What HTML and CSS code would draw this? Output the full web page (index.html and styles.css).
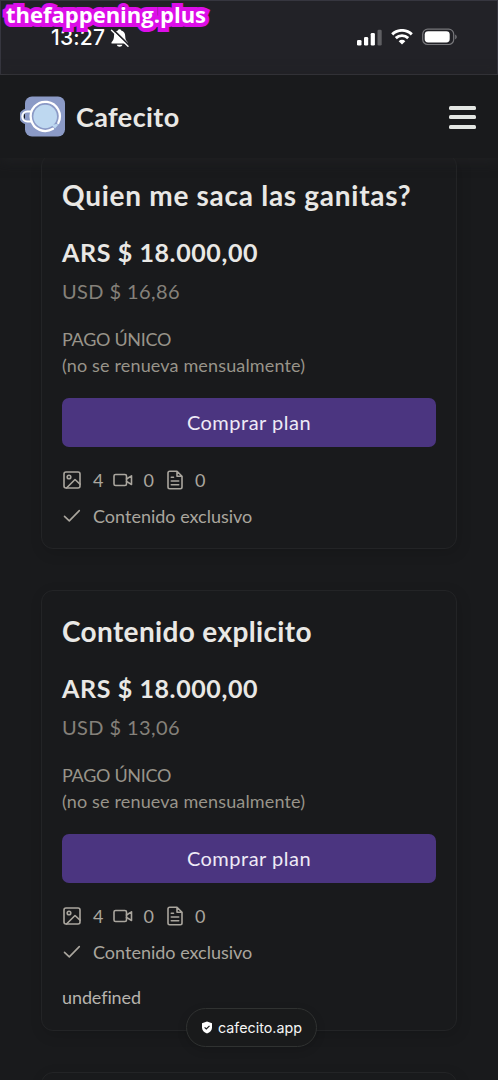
FILE: index.html
```html
<!DOCTYPE html>
<html lang="es">
<head>
<meta charset="utf-8">
<title>Cafecito</title>
<link rel="stylesheet" href="styles.css">
</head>
<body>
<svg class="defs" width="0" height="0" aria-hidden="true">
  <symbol id="image" viewBox="0 0 18 18"><rect x="1" y="1" width="16" height="16" rx="2"/><circle cx="6" cy="6" r="1.8"/><path d="M3.5 17 12 8.5l5 4.7"/></symbol>
  <symbol id="video" viewBox="0 0 20 18"><rect x="1" y="3.5" width="12.5" height="11" rx="1.6"/><path d="M13.5 8 18.5 4.8v8.7L13.5 10.4"/></symbol>
  <symbol id="file" viewBox="0 0 16 20"><path d="M10 1.2H2.7C1.8 1.2 1 2 1 2.9v14.2c0 1 .8 1.7 1.7 1.7h10.6c1 0 1.7-.8 1.7-1.7V6.2zM10 1.2v5h5M4.3 7.2h2.2M4.3 11h7.4M4.3 14.8h7.4"/></symbol>
  <symbol id="check" viewBox="0 0 18 14"><path d="m1.5 7.3 4.8 4.6L16.3 1.6"/></symbol>
</svg>
<div class="screen">
  <div class="status">
    <span class="time">13:27</span>
    <svg class="bell" viewBox="0 0 20 20"><path fill="#fff" d="M9.5 1.3c.9 0 1.5.5 1.7 1.3 2.6.7 4 2.6 4 5.3 0 3.2.9 4.500 2.500 6.400v1.200H1.500v-1.200C3 12.500 4 11 4 7.900c0-2.700 1.400-4.600 3.900-5.300.2-.8.8-1.300 1.600-1.300zM6.800 16.700h5.600c-.3 1.200-1.400 2-2.800 2s-2.500-.8-2.800-2z"/><path d="M2.600 1.200 19 17.200" stroke="#222227" stroke-width="1.800"/><path d="M1.500 2.200 18 18.300" stroke="#fff" stroke-width="1.400" stroke-linecap="round"/></svg>
    <div class="signals">
      <svg class="cell" viewBox="0 0 26 17"><rect x="0" y="11" width="4.500" height="5.500" rx="1.300"/><rect x="7" y="8" width="4.200" height="8.500" rx="1.300"/><rect x="13.700" y="4" width="4.200" height="12.500" rx="1.300"/><rect x="20.500" y=".800" width="4.200" height="15.700" rx="1.300" opacity=".28"/></svg>
      <svg class="wifi" viewBox="0 0 22 16"><g fill="none" stroke="#fff" stroke-width="2.900"><path d="M1.200 5.400a14 14 0 0 1 19.600 0"/><path d="M4.800 9.100a8.900 8.900 0 0 1 12.400 0"/></g><path fill="#fff" d="M11 15.500 7.700 12.200a4.700 4.700 0 0 1 6.600 0z"/></svg>
      <svg class="battery" viewBox="0 0 36 18"><rect x=".7" y="1.200" width="31" height="15.300" rx="5" fill="none" stroke="#77777b" stroke-width="1.200"/><rect x="2.700" y="3.200" width="25" height="11.300" rx="3.400" fill="#fff"/><path d="M33.200 6.500c2 .8 2 4 0 4.800z" fill="#77777b"/></svg>
    </div>
  </div>
  <div class="watermark">thefappening.plus</div>
  <header class="header">
    <svg class="logo" viewBox="0 0 46 42"><rect x="5" y=".500" width="40" height="40" rx="7" fill="#8b9ac6"/><path d="M10 15H7a5.500 5.500 0 0 0 0 11h3" fill="none" stroke="#8b9ac6" stroke-width="4.500"/><circle cx="25.200" cy="20.500" r="11.800" fill="#bed8f0"/><path d="M33 32.800A14.600 14.600 0 1 1 38.300 27" fill="none" stroke="#fff" stroke-width="2.300" stroke-linecap="round"/><path d="M11 15.500H7.300a5 5 0 0 0 0 10H11" fill="none" stroke="#fff" stroke-width="2"/><path d="m31.500 29 5-1 2 .500-3.500 4z" fill="#bed8f0"/></svg>
    <span class="brand">Cafecito</span>
    <div class="menu"><i></i><i></i><i></i></div>
  </header>
  <main class="plans">
    <section class="card">
      <h2 class="title title-one">Quien me saca las ganitas?</h2>
      <div class="price">ARS $ 18.000,00</div>
      <div class="usd">USD $ 16,86</div>
      <div class="once"><span class="caps">PAGO ÚNICO</span><br><span class="renew">(no se renueva mensualmente)</span></div>
      <button class="buy">Comprar plan</button>
      <div class="counts"><svg class="i-image"><use href="#image"/></svg><span>4</span><svg class="i-video"><use href="#video"/></svg><span>0</span><svg class="i-file"><use href="#file"/></svg><span>0</span></div>
      <div class="perk"><svg class="i-check"><use href="#check"/></svg><span>Contenido exclusivo</span></div>
    </section>
    <section class="card">
      <h2 class="title title-two">Contenido explicito</h2>
      <div class="price">ARS $ 18.000,00</div>
      <div class="usd">USD $ 13,06</div>
      <div class="once"><span class="caps">PAGO ÚNICO</span><br><span class="renew">(no se renueva mensualmente)</span></div>
      <button class="buy">Comprar plan</button>
      <div class="counts"><svg class="i-image"><use href="#image"/></svg><span>4</span><svg class="i-video"><use href="#video"/></svg><span>0</span><svg class="i-file"><use href="#file"/></svg><span>0</span></div>
      <div class="perk"><svg class="i-check"><use href="#check"/></svg><span>Contenido exclusivo</span></div>
      <div class="note"><span>undefined</span></div>
    </section>
    <section class="card"></section>
  </main>
  <div class="address"><svg class="shield" viewBox="0 0 12 13"><path fill="#fff" d="M6 .5 11 2.200v4.500c0 2.600-2 4.600-5 5.800-3-1.200-5-3.200-5-5.800V2.200z"/><path d="m3.600 6.300 1.700 1.700 3.200-3.200" fill="none" stroke="#1a1b1d" stroke-width="1.200"/></svg><span>cafecito.app</span></div>
</div>
</body>
</html>
```
FILE: styles.css
```css
* { box-sizing: border-box; }
body { margin: 0; background: #191a1c; color: #e9e8e5; font-family: Lato, sans-serif; }
.defs { position: absolute; }
.screen { position: relative; height: 1080px; overflow: hidden; }
.status { height: 75px; display: flex; align-items: flex-start; padding: 27px 39px 0 50px; background: #222227; border: 1px solid #36363f; border-bottom-color: #3b3b41; position: relative; z-index: 2; }
.time { font: 500 21px/20px Inter, sans-serif; color: #fff; letter-spacing: 0.2px; }
.bell { width: 20px; height: 20px; margin-left: 5px; }
.signals { margin-left: auto; display: flex; align-items: center; }
.cell { width: 26px; height: 17px; fill: #fff; margin-right: 8px; }
.wifi { width: 22px; height: 16px; margin-right: 9px; }
.battery { width: 36px; height: 18px; }
.watermark { position: absolute; z-index: 3; left: 6px; top: 1px; font: 700 22px/26px "Open Sans", sans-serif; color: #fff; -webkit-text-stroke: 8px #dc0ee8; paint-order: stroke fill; stroke-linejoin: round; white-space: nowrap; }
.header { height: 83px; display: flex; align-items: center; padding: 1px 22px 0 20px; background: #191a1c; position: relative; z-index: 2; box-shadow: 0 2px 12px #202123; }
.logo { width: 46px; height: 42px; }
.brand { font-size: 27px; font-weight: 700; letter-spacing: .4px; margin-left: 10px; line-height: 40px; }
.menu { margin-left: auto; width: 27px; display: grid; gap: 5.5px; }
.menu i { height: 4px; border-radius: 1.5px; background: #e3e6e3; }
.plans { margin: -4px 41px 0; display: grid; gap: 41px; }
.card { border: 1px solid #232426; border-radius: 12px; padding: 20px 20px 14px; box-shadow: 2px 4px 14px rgba(0,0,0,.13); min-height: 40px; }
.title { margin: 0; font-size: 28px; line-height: 40px; font-weight: 700; white-space: nowrap; }
.title-one { letter-spacing: .72px; }
.title-two { letter-spacing: .35px; }
.price { margin-top: 19px; font-size: 25px; line-height: 36px; font-weight: 700; letter-spacing: .6px; }
.usd { margin-top: 7px; font-size: 20px; line-height: 28px; letter-spacing: .4px; color: #85817a; }
.once { margin-top: 21px; font-size: 18px; line-height: 26px; color: #98948a; }
.caps { letter-spacing: -.3px; }
.renew { letter-spacing: .15px; }
.buy { display: block; width: 100%; height: 49px; margin-top: 20px; padding: 0 0 2px; border: 0; border-radius: 7px; background: #4b3580; color: #eeeaf6; font: 400 20px/28px Lato, sans-serif; letter-spacing: .5px; }
.counts { display: flex; align-items: center; height: 36px; margin-top: 15px; font-size: 18px; color: #aaa69e; }
.counts svg, .perk svg { fill: none; stroke: currentColor; stroke-width: 1.600; stroke-linejoin: round; stroke-linecap: round; }
.i-image { width: 18px; height: 18px; margin: 0 12px 0 1px; }
.i-video { width: 20px; height: 18px; margin: 0 10px 0 10px; }
.i-file { width: 16px; height: 20px; margin: 0 12px 0 13px; }
.perk { display: flex; align-items: center; height: 36px; font-size: 18px; color: #aaa69e; }
.perk span { padding-bottom: 1px; }
.i-check { width: 18px; height: 14px; margin: 0 12px 0 1px; }
.note { margin: 13px 0 5px; font-size: 18px; line-height: 28px; letter-spacing: -.1px; color: #b7b4ae; }
.address { position: absolute; z-index: 4; left: 186px; top: 1008px; width: 131px; height: 39px; display: flex; align-items: center; justify-content: center; gap: 5px; border: 1px solid #303231; border-radius: 20px; background: #191a1b; color: #f5f5f5; font: 400 14.300px/20px Inter, sans-serif; box-shadow: 0 3px 10px rgba(0,0,0,.15); }
.shield { width: 12px; height: 13px; }
```
